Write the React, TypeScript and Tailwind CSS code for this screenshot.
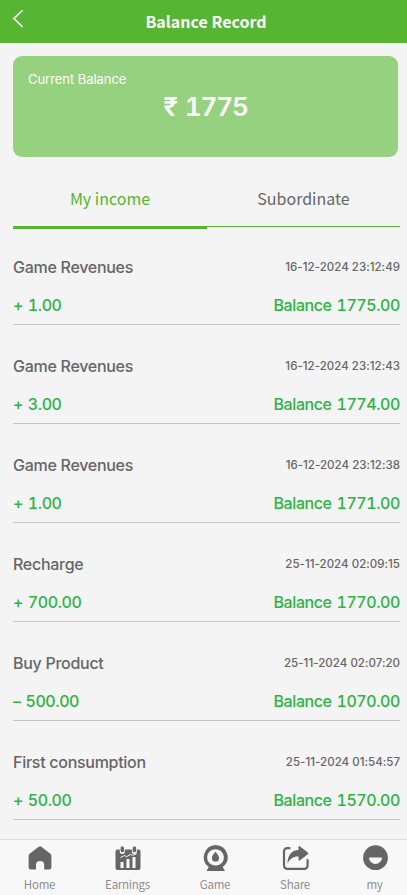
import type { ReactNode } from "react";

type Entry = { title: string; time: string; amount: string; balance: string };

const entries: Entry[] = [
  { title: "Game Revenues", time: "16-12-2024 23:12:49", amount: "+ 1.00", balance: "1775.00" },
  { title: "Game Revenues", time: "16-12-2024 23:12:43", amount: "+ 3.00", balance: "1774.00" },
  { title: "Game Revenues", time: "16-12-2024 23:12:38", amount: "+ 1.00", balance: "1771.00" },
  { title: "Recharge", time: "25-11-2024 02:09:15", amount: "+ 700.00", balance: "1770.00" },
  { title: "Buy Product", time: "25-11-2024 02:07:20", amount: "– 500.00", balance: "1070.00" },
  { title: "First consumption", time: "25-11-2024 01:54:57", amount: "+ 50.00", balance: "1570.00" },
];

function Row({ entry }: { entry: Entry }) {
  return (
    <li className="flex h-[99px] flex-col border-b border-[#c6c6c6] pt-[31px] font-medium">
      <div className="flex h-5 items-center justify-between text-[#666]">
        <span className="text-base leading-5 tracking-[-0.28px]">{entry.title}</span>
        <span className="text-[11.5px] leading-5 tracking-[0.03px]">{entry.time}</span>
      </div>
      <div className="mt-[18px] flex h-5 items-center justify-between text-base leading-5 tabular-nums tracking-[-0.42px] text-[#2fb344] [word-spacing:1px]">
        <span>{entry.amount}</span>
        <span>Balance {entry.balance}</span>
      </div>
    </li>
  );
}

function NavItem({ label, width, children }: { label: string; width: string; children: ReactNode }) {
  return (
    <a className={`flex shrink-0 flex-col items-center ${width}`}>
      <svg width="28" height="28" viewBox="0 0 28 28" className="mt-[3px] text-[#666]" fill="currentColor">
        {children}
      </svg>
      <span className="mt-1 font-['Noto_Sans_CJK_SC',sans-serif] text-[11.5px] leading-[18px] tracking-[-0.25px] text-[#8e8e8e]">{label}</span>
    </a>
  );
}

export default function App() {
  return (
    <div className="flex h-[895px] w-[407px] flex-col overflow-hidden bg-[#f4f4f4] font-['Inter',sans-serif]">
      <header className="grid h-[43px] shrink-0 grid-cols-[40px_1fr_35px] items-center bg-[#56b533] text-white">
        <svg width="16" height="24" viewBox="0 0 16 24" className="-mt-1.5 ml-[10px]" fill="none" stroke="currentColor" strokeWidth="1.5">
          <path d="M12.7 3.2 3.8 11.6l8.9 8.3" />
        </svg>
        <h1 className="-mt-0.5 text-center font-['Noto_Sans_CJK_SC',sans-serif] text-base font-bold">Balance Record</h1>
      </header>

      <section className="ml-[13px] mt-[13px] h-[101px] w-[385px] shrink-0 rounded-[9px] bg-[#96d180] text-white">
        <div className="pl-[15px] pt-[13px] text-[13px] leading-5 tracking-[-0.05px]">Current Balance</div>
        <div className="mt-px text-center text-[26px] font-semibold leading-[34px] tabular-nums tracking-[-1.1px] [word-spacing:2px]">₹ 1775</div>
      </section>

      <div className="ml-[13px] mt-[15px] grid h-[55px] w-[387px] shrink-0 grid-cols-[194px_193px] border-b border-[#56b533] text-center font-['Noto_Sans_CJK_SC',sans-serif] text-base leading-[52px]">
        <div className="h-[57px] border-b-[3px] border-[#56b533] text-[#56b533]">My income</div>
        <div className="text-[#666]">Subordinate</div>
      </div>

      <ul className="-mt-px ml-[13px] w-[387px] flex-1">
        {entries.map((entry) => <Row key={entry.time} entry={entry} />)}
      </ul>

      <nav className="flex h-14 shrink-0 border-t border-[#dcdfe6] bg-[#f8f8f8]">
        <NavItem label="Home" width="w-[79px]">
          <path d="M12.8 3.800a2 2 0 0 1 2.500 0l9.100 7a2.500 2.500 0 0 1 1 2v11.500a2.200 2.200 0 0 1-2.200 2.200h-5v-4.500a4.100 4.100 0 0 0-8.200 0v4.500H4.800a2.200 2.200 0 0 1-2.200-2.200V12.800a2.500 2.500 0 0 1 1-2z" />
        </NavItem>
        <NavItem label="Earnings" width="w-[97px]">
          <path fillRule="evenodd" d="M3.500 6.500h2.300V8.500a2.500 2.500 0 0 0 5 0V6.500h7.100V8.500a2.500 2.500 0 0 0 5 0V6.500h1.600a2 2 0 0 1 2 2V25a2 2 0 0 1-2 2h-21a2 2 0 0 1-2-2V8.500a2 2 0 0 1 2-2zM6.500 19v6h3v-6zm6-3v9h3v-9zm6-2v11h3V14z" />
          <rect x="6.600" y="3.500" width="3.400" height="5.700" rx="1.400" />
          <rect x="18.700" y="3.500" width="3.400" height="5.700" rx="1.400" />
          <path d="m6.500 14.500 4-2 2 1.300 4-2.500 2 1 4-1.500" fill="none" stroke="#f8f8f8" strokeWidth="1" />
        </NavItem>
        <NavItem label="Game" width="w-[78px]">
          <path fillRule="evenodd" d="M14.500 2a12.800 12.300 0 0 1 7.200 22l2.300 4H5.500l2.300-4A12.800 12.300 0 0 1 14.500 2zm0 4.200a8.400 8.200 0 1 0 0 16.400 8.400 8.200 0 0 0 0-16.400z" />
          <path d="M14.500 8.500c1 2.300 3.600 3.800 3.600 6.400a3.600 3.600 0 0 1-7.200 0c0-2.600 2.600-4.100 3.600-6.400z" />
        </NavItem>
        <NavItem label="Share" width="w-[82px]">
          <path d="M8.500 5.200H6.200A3.200 3.200 0 0 0 3 8.400v14.200a3.200 3.200 0 0 0 3.200 3.200h17.200a3.200 3.200 0 0 0 3.200-3.200v-5.500" fill="none" stroke="currentColor" strokeWidth="2.200" strokeLinecap="round" />
          <path d="M17.500 4v3C10.500 7 6.500 13 6.500 20.400c2.600-5 6-7.200 11-6.900v3.300a.8.800 0 0 0 1.300.7l8-6.300a1 1 0 0 0 0-1.600l-8-6.300a.8.800 0 0 0-1.300.7z" />
        </NavItem>
        <NavItem label="my" width="w-[77px]">
          <path fillRule="evenodd" d="M14.500 2.300a12.400 12.400 0 1 1 0 24.800 12.400 12.400 0 0 1 0-24.800zM8 14.500a6.500 6.500 0 0 0 13 0z" />
        </NavItem>
      </nav>
    </div>
  );
}
